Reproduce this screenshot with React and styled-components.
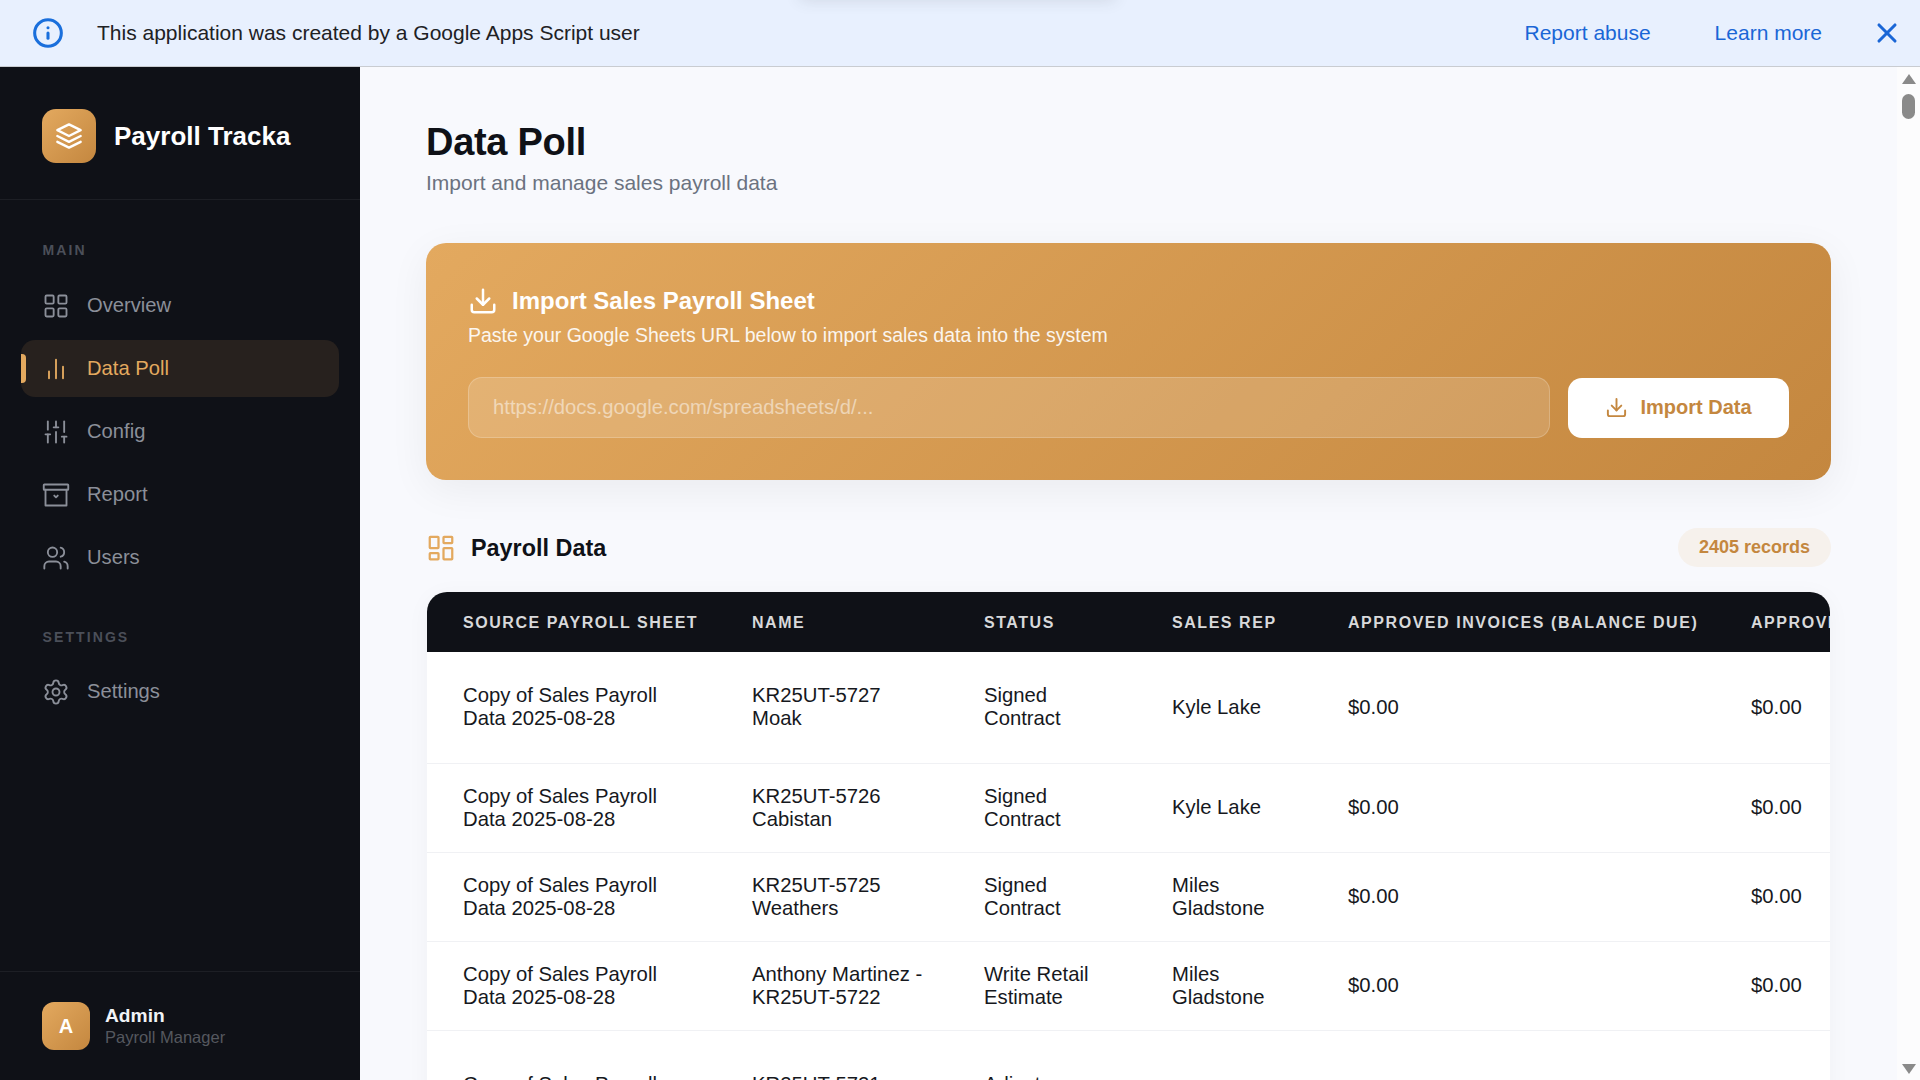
import React from 'react';
import styled, { createGlobalStyle } from 'styled-components';
import { Info, X, LayoutGrid, SlidersVertical, Users, Settings, Download } from 'lucide-react';

// lucide's current versions of these differ from the ones in the screenshot
const Glyph = ({ size = 28, sw = 1.6, children }) => (
  <svg width={size} height={size} viewBox="0 0 24 24" fill="none" stroke="currentColor" strokeWidth={sw} strokeLinecap="round" strokeLinejoin="round">
    {children}
  </svg>
);

const LayersGlyph = () => (
  <Glyph sw={2}>
    <polygon points="12 2 2 7 12 12 22 7 12 2" />
    <polyline points="2 17 12 22 22 17" />
    <polyline points="2 12 12 17 22 12" />
  </Glyph>
);

const BarsGlyph = () => (
  <Glyph>
    <line x1="18" y1="20" x2="18" y2="10" />
    <line x1="12" y1="20" x2="12" y2="4" />
    <line x1="6" y1="20" x2="6" y2="14" />
  </Glyph>
);

const ArchiveGlyph = () => (
  <Glyph>
    <rect x="1.5" y="3" width="21" height="4.5" rx="0.5" />
    <path d="M3 7.5V21h18V7.5" />
    <path d="M10.5 12.5l1.5 1.5 1.5-1.5" />
  </Glyph>
);

const PanelsGlyph = () => (
  <Glyph size={30} sw={1.8}>
    <rect x="3" y="3" width="7" height="9" rx="0.5" />
    <rect x="14" y="3" width="7" height="5" rx="0.5" />
    <rect x="14" y="12" width="7" height="9" rx="0.5" />
    <rect x="3" y="16" width="7" height="5" rx="0.5" />
  </Glyph>
);

const navMain = [
  { label: 'Overview', icon: <LayoutGrid size={28} strokeWidth={1.6} /> },
  { label: 'Data Poll', icon: <BarsGlyph />, active: true },
  { label: 'Config', icon: <SlidersVertical size={28} strokeWidth={1.6} /> },
  { label: 'Report', icon: <ArchiveGlyph /> },
  { label: 'Users', icon: <Users size={28} strokeWidth={1.6} /> },
];

const columns = [
  'Source Payroll Sheet',
  'Name',
  'Status',
  'Sales Rep',
  'Approved Invoices (Balance Due)',
  'Approved Invoices',
];
const colWidths = [289, 232, 188, 176, 403, 300];

const sheet = 'Copy of Sales Payroll Data 2025-08-28';
const rows = [
  { name: 'KR25UT-5727 Moak', status: 'Signed Contract', rep: 'Kyle Lake', h: 111 },
  { name: 'KR25UT-5726 Cabistan', status: 'Signed Contract', rep: 'Kyle Lake', h: 89 },
  { name: 'KR25UT-5725 Weathers', status: 'Signed Contract', rep: 'Miles Gladstone', h: 89 },
  { name: 'Anthony Martinez - KR25UT-5722', status: 'Write Retail Estimate', rep: 'Miles Gladstone', h: 89 },
  { name: 'KR25UT-5721 Ames', status: 'Adjuster Meeting', rep: 'Kyle Lake', h: 132 },
];

const App = () => (
  <Page>
    <GlobalStyle />
    <Banner>
      <InfoIcon><Info size={32} strokeWidth={2.3} /></InfoIcon>
      <BannerText>This application was created by a Google Apps Script user</BannerText>
      <BannerLink $gap={64}>Report abuse</BannerLink>
      <BannerLink $gap={49}>Learn more</BannerLink>
      <CloseIcon><X size={32} strokeWidth={2.3} /></CloseIcon>
    </Banner>
    <Body>
      <Sidebar>
        <Brand>
          <LogoBox><LayersGlyph /></LogoBox>
          <BrandName>Payroll Tracka</BrandName>
        </Brand>
        <Nav>
          <SectionLabel>MAIN</SectionLabel>
          {navMain.map(({ label, icon, active }) => (
            <NavItem key={label} $active={active}>
              {icon}
              {label}
            </NavItem>
          ))}
          <SectionLabel $second>SETTINGS</SectionLabel>
          <NavItem>
            <Settings size={28} strokeWidth={1.6} />
            Settings
          </NavItem>
        </Nav>
        <UserBox>
          <Avatar>A</Avatar>
          <div>
            <UserName>Admin</UserName>
            <UserRole>Payroll Manager</UserRole>
          </div>
        </UserBox>
      </Sidebar>
      <Main>
        <Content>
          <Title>Data Poll</Title>
          <Subtitle>Import and manage sales payroll data</Subtitle>
          <ImportCard>
            <ImportTitle>
              <Download size={30} strokeWidth={2} />
              Import Sales Payroll Sheet
            </ImportTitle>
            <ImportHint>Paste your Google Sheets URL below to import sales data into the system</ImportHint>
            <ImportRow>
              <UrlInput placeholder="https://docs.google.com/spreadsheets/d/..." readOnly />
              <ImportButton>
                <Download size={23} strokeWidth={2} />
                Import Data
              </ImportButton>
            </ImportRow>
          </ImportCard>
          <SectionHead>
            <SectionIcon><PanelsGlyph /></SectionIcon>
            <SectionTitle>Payroll Data</SectionTitle>
            <RecordCount>2405 records</RecordCount>
          </SectionHead>
          <TableWrap>
            <Table>
              <colgroup>
                {colWidths.map((w, i) => <col key={i} width={w} />)}
              </colgroup>
              <thead>
                <tr>{columns.map((c) => <Th key={c}>{c}</Th>)}</tr>
              </thead>
              <tbody>
                {rows.map((r) => (
                  <Tr key={r.name} $h={r.h}>
                    <Td>{sheet}</Td>
                    <Td>{r.name}</Td>
                    <Td>{r.status}</Td>
                    <Td>{r.rep}</Td>
                    <Td>$0.00</Td>
                    <Td>$0.00</Td>
                  </Tr>
                ))}
              </tbody>
            </Table>
          </TableWrap>
        </Content>
        <ScrollBar>
          <ArrowUp />
          <Thumb />
          <ArrowDown />
        </ScrollBar>
      </Main>
    </Body>
  </Page>
);

export default App;

const GlobalStyle = createGlobalStyle`
  html, body {
    margin: 0;
    height: 100%;
    overflow: hidden;
  }
  body {
    font-family: "Liberation Sans", Arial, sans-serif;
  }
  * {
    box-sizing: border-box;
  }
`;

const Page = styled.div`
  width: 1920px;
  height: 1080px;
  display: flex;
  flex-direction: column;
  overflow: hidden;
`;

const Banner = styled.div`
  position: relative;
  height: 67px;
  flex: none;
  display: flex;
  align-items: center;
  padding: 0 17px 0 32px;
  background: #e8f0fe;
  border-bottom: 1px solid #c9ccd1;
  font-size: 21px;
  overflow: hidden;

  /* the shade of something hanging just above the top edge */
  &::after {
    content: '';
    position: absolute;
    left: 800px;
    top: -20px;
    width: 315px;
    height: 20px;
    box-shadow: 0 0 16px rgba(60, 64, 67, 0.14);
  }
`;

const InfoIcon = styled.span`
  display: flex;
  color: #1a6fdc;
`;

const BannerText = styled.div`
  margin-left: 33px;
  flex: 1;
  color: #202124;
`;

const BannerLink = styled.a`
  color: #1a66d6;
  margin-right: ${(p) => p.$gap}px;
`;

const CloseIcon = styled.span`
  display: flex;
  color: #1a66d6;
`;

const Body = styled.div`
  flex: 1;
  display: flex;
  min-height: 0;
`;

const Sidebar = styled.aside`
  width: 360px;
  flex: none;
  display: flex;
  flex-direction: column;
  background: #0f1117;
`;

const Brand = styled.div`
  height: 133px;
  flex: none;
  display: flex;
  align-items: center;
  gap: 18px;
  padding: 6px 42px 0;
  border-bottom: 1px solid #1d1f25;
`;

const LogoBox = styled.div`
  width: 54px;
  height: 54px;
  border-radius: 14px;
  display: flex;
  align-items: center;
  justify-content: center;
  color: #fff;
  background: linear-gradient(135deg, #e3a95f, #c4873f);
`;

const BrandName = styled.div`
  color: #fff;
  font-size: 26px;
  font-weight: 700;
`;

const Nav = styled.nav`
  flex: 1;
  padding: 0 21px;
`;

const SectionLabel = styled.div`
  color: #4b4f59;
  font-size: 14px;
  font-weight: 700;
  letter-spacing: 2.1px;
  padding-left: 21.5px;
  margin-top: ${(p) => (p.$second ? 43 : 42)}px;
  margin-bottom: ${(p) => (p.$second ? 18 : 19)}px;
  line-height: 16px;
`;

const NavItem = styled.div`
  position: relative;
  height: 57px;
  margin-bottom: 6px;
  display: flex;
  align-items: center;
  gap: 17px;
  padding-left: 21px;
  border-radius: 14px;
  font-size: 20.2px;
  color: ${(p) => (p.$active ? '#e3a95f' : '#8b8f99')};
  background: ${(p) => (p.$active ? '#27211e' : 'transparent')};

  &::before {
    content: '';
    display: ${(p) => (p.$active ? 'block' : 'none')};
    position: absolute;
    left: 0;
    top: 14px;
    width: 5px;
    height: 29px;
    border-radius: 0 4px 4px 0;
    background: #e3a95f;
  }
`;

const UserBox = styled.div`
  height: 109px;
  flex: none;
  display: flex;
  align-items: center;
  gap: 15px;
  padding: 0 42px;
  border-top: 1px solid #1d1f25;
`;

const Avatar = styled.div`
  width: 48px;
  height: 48px;
  border-radius: 12px;
  display: flex;
  align-items: center;
  justify-content: center;
  color: #fff;
  font-size: 20px;
  font-weight: 700;
  background: linear-gradient(135deg, #e3a95f, #c4873f);
`;

const UserName = styled.div`
  color: #f1f3f6;
  font-size: 19.2px;
  font-weight: 700;
  line-height: 22px;
`;

const UserRole = styled.div`
  color: #55585f;
  font-size: 16.5px;
  line-height: 20px;
`;

const Main = styled.main`
  flex: 1;
  min-width: 0;
  display: flex;
  background: #f8f9fd;
`;

const Content = styled.div`
  flex: 1;
  min-width: 0;
  padding: 52px 66px 0;
  overflow: hidden;
`;

const Title = styled.h1`
  margin: 0;
  color: #0f1117;
  font-size: 38px;
  font-weight: 700;
  letter-spacing: -0.3px;
  line-height: 46px;
`;

const Subtitle = styled.div`
  color: #6b7280;
  font-size: 21px;
  line-height: 24px;
  margin-top: 6px;
`;

const ImportCard = styled.section`
  margin-top: 48px;
  height: 237px;
  padding: 43px 42px 0;
  border-radius: 20px;
  color: #fff;
  background: linear-gradient(135deg, #e3a95f, #c4873f);
  box-shadow: 0 10px 40px rgba(15, 17, 23, 0.06);
`;

const ImportTitle = styled.div`
  display: flex;
  align-items: center;
  gap: 14px;
  font-size: 24px;
  font-weight: 700;
  line-height: 30px;
`;

const ImportHint = styled.div`
  margin-top: 6px;
  font-size: 19.5px;
  line-height: 26px;
  opacity: 0.9;
`;

const ImportRow = styled.div`
  display: flex;
  align-items: flex-end;
  gap: 18px;
  margin-top: 29px;
`;

const UrlInput = styled.input`
  flex: 1;
  height: 61px;
  padding: 0 24px;
  border: 1px solid rgba(255, 255, 255, 0.2);
  border-radius: 14px;
  background: rgba(255, 255, 255, 0.15);
  color: #fff;
  font-family: inherit;
  font-size: 20.25px;
  outline: none;

  &::placeholder {
    color: rgba(255, 255, 255, 0.5);
  }
`;

const ImportButton = styled.button`
  width: 221px;
  height: 60px;
  flex: none;
  display: flex;
  align-items: center;
  justify-content: center;
  gap: 12px;
  padding-bottom: 2px;
  border: none;
  border-radius: 14px;
  background: #fff;
  color: #c4873f;
  font-family: inherit;
  font-size: 20px;
  font-weight: 700;
`;

const SectionHead = styled.div`
  margin-top: 48px;
  height: 40px;
  display: flex;
  align-items: center;
  gap: 15px;
`;

const SectionIcon = styled.span`
  display: flex;
  color: #e3a95f;
`;

const SectionTitle = styled.div`
  flex: 1;
  color: #0f1117;
  font-size: 23.4px;
  font-weight: 700;
`;

const RecordCount = styled.div`
  height: 39px;
  margin-bottom: 2px;
  padding: 0 21px;
  display: flex;
  align-items: center;
  border-radius: 20px;
  background: #f6f1ec;
  color: #c4873f;
  font-size: 18px;
  font-weight: 700;
`;

const TableWrap = styled.div`
  margin: 24px 1px 0;
  width: 1403px;
  overflow: hidden;
  border-radius: 20px 20px 0 0;
  background: #fff;
  box-shadow: 0 4px 24px rgba(15, 17, 23, 0.04);
`;

const Table = styled.table`
  width: 1588px;
  table-layout: fixed;
  border-collapse: collapse;
`;

const Th = styled.th`
  height: 60px;
  padding: 1px 0 0 36px;
  background: #0f1117;
  color: #d8d9db;
  font-size: 16px;
  font-weight: 700;
  letter-spacing: 1.55px;
  text-align: left;
  text-transform: uppercase;
  white-space: nowrap;
`;

const Tr = styled.tr`
  height: ${(p) => p.$h}px;
  border-bottom: 1px solid #f0f1f4;
`;

const Td = styled.td`
  padding: 0 20px 0 36px;
  color: #16181d;
  font-size: 20.3px;
  line-height: 23px;
`;

const ScrollBar = styled.div`
  width: 23px;
  flex: none;
  display: flex;
  flex-direction: column;
  align-items: center;
  padding: 7px 0 6px;
  background: #fcfcfd;
`;

const ArrowUp = styled.div`
  width: 0;
  height: 0;
  border-left: 7px solid transparent;
  border-right: 7px solid transparent;
  border-bottom: 10px solid #8a8a8a;
`;

const Thumb = styled.div`
  width: 13px;
  height: 25px;
  margin-top: 10px;
  border-radius: 7px;
  background: #8a8a8a;
`;

const ArrowDown = styled.div`
  width: 0;
  height: 0;
  margin-top: auto;
  border-left: 7px solid transparent;
  border-right: 7px solid transparent;
  border-top: 10px solid #8a8a8a;
`;
